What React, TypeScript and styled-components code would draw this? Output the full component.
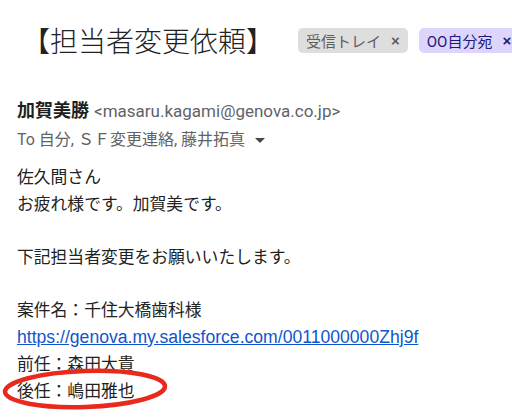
import React from "react";
import styled, { createGlobalStyle } from "styled-components";

const GlobalStyle = createGlobalStyle`
  html, body {
    margin: 0;
    padding: 0;
    background: #ffffff;
  }
  body {
    font-family: "Noto Sans CJK JP", sans-serif;
    color: #222222;
  }
`;

const Page = styled.div`
  width: 512px;
  height: 419px;
  overflow: hidden;
  padding: 23px 0 0 17px;
  box-sizing: border-box;
`;

const Header = styled.div`
  display: flex;
  align-items: center;
  height: 34px;
  white-space: nowrap;
`;

const Title = styled.h1`
  margin: 0 0 0 5px;
  font-family: "Noto Sans CJK JP", sans-serif;
  font-weight: 300;
  font-size: 28px;
  line-height: 34px;
  color: #222222;
`;

const Tags = styled.div`
  display: flex;
  gap: 11px;
  margin-left: 24px;
`;

const Tag = styled.span<{ $tone: "gray" | "purple" }>`
  display: inline-flex;
  align-items: center;
  flex-shrink: 0;
  height: 25px;
  padding: 0 8px;
  border-radius: 5px;
  font-family: "Roboto", "Noto Sans CJK JP", sans-serif;
  font-size: 15px;
  background: ${(p) => (p.$tone === "gray" ? "#dedede" : "#ddd5fb")};
  color: ${(p) => (p.$tone === "gray" ? "#5e5e5e" : "#1d1a7a")};
`;

const TagClose = styled.span`
  margin-left: 10px;
  font-family: "Liberation Sans", sans-serif;
  font-weight: 700;
  font-size: 15px;
`;

const Sender = styled.div`
  margin-top: 40px;
  display: flex;
  align-items: baseline;
  gap: 5px;
  line-height: 24px;
  white-space: nowrap;
`;

const SenderName = styled.span`
  font-family: "Noto Sans CJK JP", sans-serif;
  font-weight: 700;
  font-size: 18px;
  color: #1f1f1f;
`;

const SenderMail = styled.span`
  font-family: "Roboto", sans-serif;
  font-size: 17px;
  color: #5f6368;
`;

const Recipients = styled.div`
  margin-top: 5px;
  display: flex;
  align-items: center;
  gap: 10px;
  line-height: 24px;
  font-family: "Roboto", "Noto Sans CJK JP", sans-serif;
  font-size: 16px;
  color: #5f6368;
  white-space: nowrap;
`;

const Body = styled.div`
  margin-top: 11px;
  font-family: "Noto Sans CJK JP", sans-serif;
  font-size: 16.8px;
  line-height: 26.6px;
  color: #222222;
`;

const Line = styled.div`
  white-space: nowrap;
  min-height: 26.6px;
`;

const Marked = styled.div`
  position: relative;
  display: inline-block;
  white-space: nowrap;
`;

const Circle = styled.svg`
  position: absolute;
  left: -17px;
  top: -16px;
  width: 180px;
  height: 56px;
  overflow: visible;
  pointer-events: none;
`;

const Link = styled.a`
  font-family: "Liberation Sans", Arial, sans-serif;
  font-size: 17.6px;
  color: #1155cc;
  text-decoration: underline;
`;

export default function App() {
  return (
    <Page>
      <GlobalStyle />
      <Header>
        <Title>【担当者変更依頼】</Title>
        <Tags>
          <Tag $tone="gray">
            受信トレイ<TagClose>×</TagClose>
          </Tag>
          <Tag $tone="purple">
            OO自分宛<TagClose>×</TagClose>
          </Tag>
        </Tags>
      </Header>

      <Sender>
        <SenderName>加賀美勝</SenderName>
        <SenderMail>&lt;masaru.kagami@genova.co.jp&gt;</SenderMail>
      </Sender>
      <Recipients>
        <span>To 自分, ＳＦ変更連絡, 藤井拓真</span>
        <svg width="10" height="5" viewBox="0 0 10 5">
          <path d="M0 0 L10 0 L5 5 Z" fill="#444746" />
        </svg>
      </Recipients>

      <Body>
        <Line>佐久間さん</Line>
        <Line>お疲れ様です。加賀美です。</Line>
        <Line />
        <Line>下記担当者変更をお願いいたします。</Line>
        <Line />
        <Line>案件名：千住大橋歯科様</Line>
        <Line>
          <Link href="#">https://genova.my.salesforce.com/0011000000Zhj9f</Link>
        </Line>
        <Line>前任：森田大貴</Line>
        <Marked>
          後任：嶋田雅也
          <Circle viewBox="0 0 180 56">
            <ellipse
              cx="85"
              cy="28"
              rx="80"
              ry="18"
              fill="none"
              stroke="#e8291c"
              strokeWidth="4.5"
              transform="rotate(-2 85 28)"
            />
          </Circle>
        </Marked>
      </Body>
    </Page>
  );
}
